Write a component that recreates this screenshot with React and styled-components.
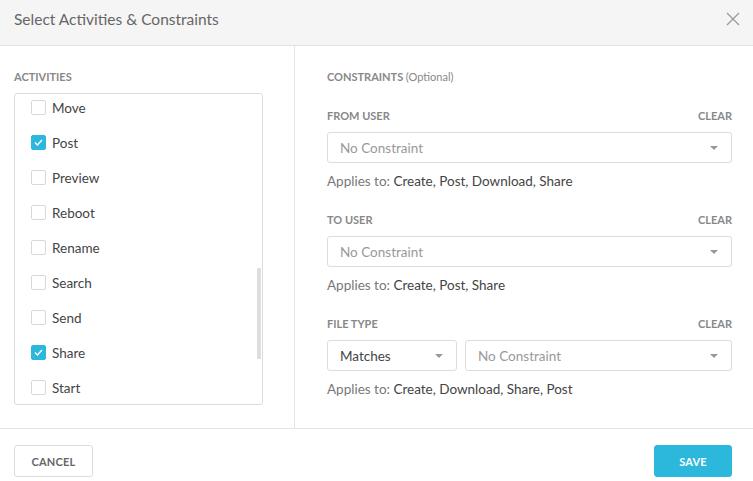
import React, { useLayoutEffect, useRef } from 'react';
import styled, { createGlobalStyle } from 'styled-components';

const GlobalStyle = createGlobalStyle`
  html, body {
    margin: 0;
    padding: 0;
    background: #fff;
  }
  body {
    font-family: Lato, "Open Sans", Arial, sans-serif;
    color: #444;
  }
  * { box-sizing: border-box; }
`;

const Modal = styled.div`
  width: 753px;
  height: 481px;
  display: flex;
  flex-direction: column;
  background: #fff;
`;

const Header = styled.div`
  height: 46px;
  flex-shrink: 0;
  display: flex;
  align-items: center;
  justify-content: space-between;
  padding: 0 13px 7px 14px;
  background: #f5f5f5;
  border-bottom: 1px solid #e2e2e2;
`;

const Title = styled.h3`
  margin: 0;
  font-size: 15.5px;
  font-weight: 400;
  color: #666;
`;

const CloseButton = styled.button`
  border: none;
  background: none;
  padding: 0;
  width: 14px;
  height: 14px;
  display: flex;
  cursor: pointer;
`;

const Body = styled.div`
  height: 383px;
  flex-shrink: 0;
  display: grid;
  grid-template-columns: 295px 1fr;
  border-bottom: 1px solid #e5e5e5;
`;

const LeftColumn = styled.div`
  padding: 25px 31px 0 14px;
  border-right: 1px solid #e5e5e5;
  display: flex;
  flex-direction: column;
`;

const RightColumn = styled.div`
  padding: 25px 21px 0 32px;
  display: flex;
  flex-direction: column;
`;

const SectionLabel = styled.div`
  font-size: 11px;
  font-weight: 700;
  text-transform: uppercase;
  color: #888;
  line-height: 12px;

  span {
    font-weight: 400;
    text-transform: none;
  }
`;

const ListWrap = styled.div`
  position: relative;
  margin-top: 10px;
  height: 312px;
  border: 1px solid #dcdcdc;
  border-radius: 3px;
`;

const ListBox = styled.div`
  height: 100%;
  overflow: hidden;
  padding: 3px 0 8px;
`;

const ScrollThumb = styled.div`
  position: absolute;
  right: 1px;
  width: 4px;
  border-radius: 1px;
  background: #dedede;
`;

const Item = styled.label`
  height: 35px;
  display: flex;
  align-items: center;
  gap: 6px;
  padding-left: 16px;
  font-size: 13.5px;
  color: #444;
  cursor: pointer;
`;

const Box = styled.span`
  width: 15px;
  height: 15px;
  border-radius: 2px;
  border: 1px solid ${p => (p.$checked ? '#2cb7dc' : '#d8d8d8')};
  background: ${p => (p.$checked ? '#2cb7dc' : '#fff')};
  display: flex;
  align-items: center;
  justify-content: center;
  flex-shrink: 0;
`;

const Section = styled.div`
  margin-top: ${p => (p.$first ? '27px' : '25px')};
`;

const LabelRow = styled.div`
  display: flex;
  justify-content: space-between;
  align-items: center;
`;

const Clear = styled(SectionLabel)`
  cursor: pointer;
`;

const SelectRow = styled.div`
  margin-top: 10px;
  display: flex;
  gap: 8px;
`;

const Select = styled.div`
  height: 31px;
  flex: ${p => (p.$width ? `0 0 ${p.$width}` : '1')};
  border: 1px solid #dcdcdc;
  border-radius: 3px;
  display: flex;
  align-items: center;
  justify-content: space-between;
  padding: 0 13px 0 12px;
  font-size: 13.5px;
  color: ${p => (p.$placeholder ? '#999' : '#444')};
`;

const Caret = styled.span`
  width: 0;
  height: 0;
  border-left: 4px solid transparent;
  border-right: 4px solid transparent;
  border-top: 4px solid #999;
`;

const Applies = styled.div`
  margin-top: 10px;
  font-size: 13.5px;
  line-height: 16px;
  color: #777;

  b {
    font-weight: 400;
    color: #444;
  }
`;

const Footer = styled.div`
  flex: 1;
  display: flex;
  align-items: flex-start;
  justify-content: space-between;
  padding: 16px 21px 0 14px;
`;

const Button = styled.button`
  height: 32px;
  width: ${p => p.$width};
  border-radius: 3px;
  font-family: inherit;
  font-size: 11px;
  font-weight: 700;
  letter-spacing: 0.2px;
  cursor: pointer;
  border: 1px solid ${p => (p.$primary ? '#2cb7dc' : '#dcdcdc')};
  background: ${p => (p.$primary ? '#2cb7dc' : '#fff')};
  color: ${p => (p.$primary ? '#fff' : '#666')};
`;

const activities = [
  'Access', 'Approve', 'Archive', 'Comment', 'Copy', 'Create', 'Delete', 'Download',
  'Edit', 'Export', 'Import', 'Install', 'Lock', 'Login', 'Logout', 'Modify', 'Mount',
  'Move', 'Post', 'Preview', 'Reboot', 'Rename', 'Search', 'Send', 'Share', 'Start',
  'Stop', 'Sync', 'Unlock', 'Upload',
];
const checked = ['Post', 'Share'];

const Check = () => (
  <svg width="9" height="7" viewBox="0 0 9 7">
    <path d="M1 3.6 L3.4 6 L8 1" fill="none" stroke="#fff" strokeWidth="1.4" />
  </svg>
);

const constraints = [
  { label: 'From User', applies: 'Create, Post, Download, Share' },
  { label: 'To User', applies: 'Create, Post, Share' },
  { label: 'File Type', applies: 'Create, Download, Share, Post', matches: true },
];

export default function App() {
  const listRef = useRef(null);

  useLayoutEffect(() => {
    if (listRef.current) listRef.current.scrollTop = 602;
  }, []);

  return (
    <Modal>
      <GlobalStyle />
      <Header>
        <Title>Select Activities &amp; Constraints</Title>
        <CloseButton aria-label="Close">
          <svg width="14" height="14" viewBox="0 0 14 14">
            <path d="M1 1 L13 13 M13 1 L1 13" stroke="#9a9a9a" strokeWidth="1.3" />
          </svg>
        </CloseButton>
      </Header>
      <Body>
        <LeftColumn>
          <SectionLabel>Activities</SectionLabel>
          <ListWrap>
            <ListBox ref={listRef}>
              {activities.map(a => (
                <Item key={a}>
                  <Box $checked={checked.includes(a)}>
                    {checked.includes(a) && <Check />}
                  </Box>
                  {a}
                </Item>
              ))}
            </ListBox>
            <ScrollThumb style={{ top: 174, height: 91 }} />
          </ListWrap>
        </LeftColumn>
        <RightColumn>
          <SectionLabel>Constraints <span>(Optional)</span></SectionLabel>
          {constraints.map((c, i) => (
            <Section key={c.label} $first={i === 0}>
              <LabelRow>
                <SectionLabel>{c.label}</SectionLabel>
                <Clear>Clear</Clear>
              </LabelRow>
              <SelectRow>
                {c.matches && (
                  <Select $width="130px">
                    Matches
                    <Caret />
                  </Select>
                )}
                <Select $placeholder>
                  No Constraint
                  <Caret />
                </Select>
              </SelectRow>
              <Applies>Applies to: <b>{c.applies}</b></Applies>
            </Section>
          ))}
        </RightColumn>
      </Body>
      <Footer>
        <Button $width="79px">CANCEL</Button>
        <Button $primary $width="78px">SAVE</Button>
      </Footer>
    </Modal>
  );
}
